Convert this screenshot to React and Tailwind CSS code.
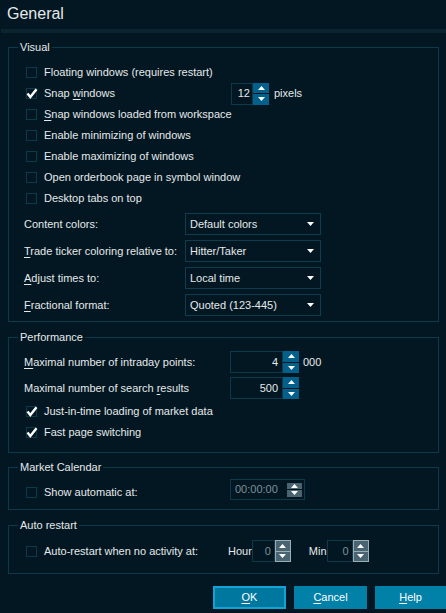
import React from 'react';

const Tri = ({ up, className = '' }) => (
    <svg width="7" height="4" viewBox="0 0 7 4" className={className}>
        <polygon points={up ? '3.5,0 7,4 0,4' : '0,0 7,0 3.5,4'} fill="#ffffff" />
    </svg>
);

const Box = ({ checked }) => (
    <span className="relative w-[11px] h-[11px] border border-[#0d3a4b] shrink-0">
        {checked && (
            <svg width="12" height="11" viewBox="0 0 12 11" className="absolute left-[-1px] top-[-1px]">
                <path d="M1.5 5.5 L4.3 9 L10.5 1.2" stroke="#ffffff" strokeWidth="2.4" fill="none" />
            </svg>
        )}
    </span>
);

const U = ({ children }) => <span className="underline underline-offset-2">{children}</span>;

const CheckRow = ({ checked, children, className = '' }) => (
    <div className={`flex items-center h-[21px] pl-[2px] ${className}`}>
        <Box checked={checked} />
        <span className="ml-[7px] whitespace-nowrap">{children}</span>
    </div>
);

const BlueSpin = () => (
    <div className="w-[16px] h-[22px] flex flex-col gap-[1px]">
        <div className="flex-1 bg-[#02608a] flex items-center justify-center"><Tri up /></div>
        <div className="flex-1 bg-[#02608a] flex items-center justify-center"><Tri /></div>
    </div>
);

const GraySpin = () => (
    <div className="w-[16px] h-[22px] flex flex-col border border-[#9aaeb6] divide-y divide-[#9aaeb6]">
        <div className="flex-1 bg-[#4a6571] flex items-center justify-center"><Tri up /></div>
        <div className="flex-1 bg-[#4a6571] flex items-center justify-center"><Tri /></div>
    </div>
);

const Select = ({ value }) => (
    <div className="w-[136px] h-[22px] border border-[#0e3d50] flex items-center justify-between pl-[4px] pr-[6px]">
        <span>{value}</span>
        <Tri />
    </div>
);

const Group = ({ title, children, className = '' }) => (
    <fieldset className={`ml-[8px] mr-[7px] border border-[#0d3a4b] ${className}`}>
        <legend className="ml-[9px] px-[2px] leading-[13px]">{title}</legend>
        {children}
    </fieldset>
);

export default function App() {
    return (
        <div className="w-[446px] h-[613px] overflow-hidden bg-[#021722] font-['Liberation_Sans',Arial,sans-serif] text-[11px] text-[#e6e9ea] flex flex-col">
            <div className="h-[29px] pl-[7px] flex items-center text-[16px] pb-[2px]">General</div>
            <div className="ml-[1px] h-[4px] bg-[#0a2530]"></div>

            <Group title="Visual" className="mt-[8px]">
                <div className="pl-[15px] pt-[8px] pb-[5px]">
                    <CheckRow>Floating windows (requires restart)</CheckRow>
                    <div className="flex items-center h-[21px] pl-[2px]">
                        <Box checked />
                        <span className="ml-[7px] w-[187px]">Snap <U>w</U>indows</span>
                        <div className="w-[22px] h-[22px] border border-[#0d3a4b] flex items-center justify-end pr-[2px]">12</div>
                        <BlueSpin />
                        <span className="ml-[5px]">pixels</span>
                    </div>
                    <CheckRow><U>S</U>nap windows loaded from workspace</CheckRow>
                    <CheckRow>Enable minimizing of windows</CheckRow>
                    <CheckRow>Enable maximizing of windows</CheckRow>
                    <CheckRow>Open orderbook page in symbol window</CheckRow>
                    <CheckRow>Desktop tabs on top</CheckRow>

                    <div className="mt-[4px] flex flex-col gap-[5px]">
                        <div className="flex items-center">
                            <span className="w-[161px]">Content colors:</span>
                            <Select value="Default colors" />
                        </div>
                        <div className="flex items-center">
                            <span className="w-[161px]"><U>T</U>rade ticker coloring relative to:</span>
                            <Select value="Hitter/Taker" />
                        </div>
                        <div className="flex items-center">
                            <span className="w-[161px]"><U>A</U>djust times to:</span>
                            <Select value="Local time" />
                        </div>
                        <div className="flex items-center">
                            <span className="w-[161px]"><U>F</U>ractional format:</span>
                            <Select value="Quoted (123-445)" />
                        </div>
                    </div>
                </div>
            </Group>

            <Group title="Performance" className="mt-[9px]">
                <div className="pl-[15px] pt-[7px] pb-[9px]">
                    <div className="flex flex-col gap-[4px]">
                        <div className="flex items-center">
                            <span className="w-[206px]"><U>M</U>aximal number of intraday points:</span>
                            <div className="w-[53px] h-[22px] border border-[#0d3a4b] flex items-center justify-end pr-[4px]">4</div>
                            <BlueSpin />
                            <span className="ml-[4px]">000</span>
                        </div>
                        <div className="flex items-center">
                            <span className="w-[206px]">Maximal number of search <U>r</U>esults</span>
                            <div className="w-[53px] h-[22px] border border-[#0d3a4b] flex items-center justify-end pr-[4px]">500</div>
                            <BlueSpin />
                        </div>
                    </div>
                    <CheckRow checked className="mt-[2px]">Just-in-time loading of market data</CheckRow>
                    <CheckRow checked>Fast page switching</CheckRow>
                </div>
            </Group>

            <Group title="Market Calendar" className="mt-[8px]">
                <div className="pl-[15px] pt-[5px] pb-[6px] flex items-start">
                    <div className="flex items-center h-[21px] mt-[3px] pl-[2px]">
                        <Box />
                        <span className="ml-[7px] w-[186px]">Show automatic at:</span>
                    </div>
                    <div className="w-[75px] h-[21px] border border-[#0d3a4b] flex items-center justify-between pl-[4px] pr-[2px] text-[#7d9098]">
                        <span>00:00:00</span>
                        <div className="w-[15px] h-[14px] flex flex-col gap-[1px]">
                            <div className="flex-1 bg-[#4a6571] flex items-center justify-center"><Tri up /></div>
                            <div className="flex-1 bg-[#4a6571] flex items-center justify-center"><Tri /></div>
                        </div>
                    </div>
                </div>
            </Group>

            <Group title="Auto restart" className="mt-[9px]">
                <div className="pl-[15px] pt-[8px] pb-[11px]">
                    <div className="flex items-center h-[22px] pl-[2px]">
                        <Box />
                        <span className="ml-[7px] w-[184px]">Auto-restart when no activity at:</span>
                        <span>Hour</span>
                        <div className="w-[23px] h-[22px] border border-[#0d3a4b] flex items-center justify-end pr-[3px] text-[#7d9098]">0</div>
                        <GraySpin />
                        <span className="ml-[18px]">Min</span>
                        <div className="w-[26px] h-[22px] border border-[#0d3a4b] flex items-center justify-end pr-[3px] text-[#7d9098]">0</div>
                        <GraySpin />
                    </div>
                </div>
            </Group>

            <div className="mt-[12px] flex justify-end gap-[8px]">
                <button className="w-[73px] h-[23px] bg-[#00779f] border-2 border-[#12a2d4] text-white flex items-center justify-center"><U>O</U>K</button>
                <button className="w-[73px] h-[23px] bg-[#0180a8] text-white flex items-center justify-center"><U>C</U>ancel</button>
                <button className="w-[71px] h-[23px] bg-[#0180a8] text-white flex items-center justify-center"><U>H</U>elp</button>
            </div>
        </div>
    );
}
